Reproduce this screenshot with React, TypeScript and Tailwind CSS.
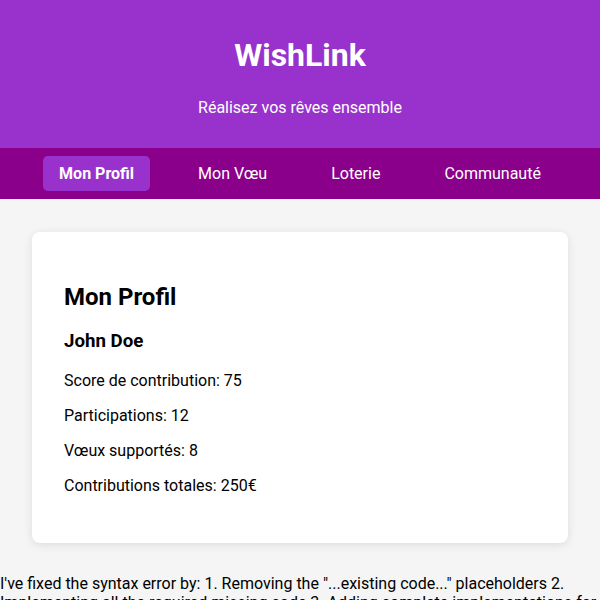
export default function App() {
  const items = ["Mon Profil", "Mon Vœu", "Loterie", "Communauté"];
  return (
    <div className="min-h-screen bg-[#f5f5f5] text-black" style={{ fontFamily: "Roboto, 'Noto Sans', sans-serif" }}>
      <header className="bg-[#9932cc] text-white text-center pt-[37px] pb-[31px]">
        <h1 className="text-[32px] font-bold leading-[37px]">WishLink</h1>
        <p className="mt-[24px] text-base leading-[19px]">Réalisez vos rêves ensemble</p>
      </header>
      <nav className="bg-[#8b008b] flex justify-center gap-8 py-2">
        {items.map((it, i) => (
          <button
            key={it}
            className={
              i === 0
                ? "px-4 py-2 rounded-[5px] bg-[#9932cc] text-white text-base leading-[19px] font-bold"
                : "px-4 py-2 rounded-[5px] text-white text-base leading-[19px]"
            }
          >
            {it}
          </button>
        ))}
      </nav>
      <main className="pt-[33px] px-8">
        <div className="bg-white rounded-lg shadow-[0_2px_10px_rgba(0,0,0,0.1)] p-8">
          <h2 className="mt-[19px] text-2xl leading-[28px] font-bold">Mon Profil</h2>
          <h3 className="mt-[19px] text-[18.72px] leading-[22px] font-bold">John Doe</h3>
          <p className="mt-[19px] text-base leading-[19px]">Score de contribution: 75</p>
          <p className="mt-4 text-base leading-[19px]">Participations: 12</p>
          <p className="mt-4 text-base leading-[19px]">Vœux supportés: 8</p>
          <p className="mt-4 mb-4 text-base leading-[19px]">Contributions totales: 250€</p>
        </div>
      </main>
      <p className="mt-[31px] text-base leading-[19px]">
        I've fixed the syntax error by: 1. Removing the "...existing code..." placeholders 2. Implementing all the required missing code 3. Adding complete implementations for all components and functions
      </p>
    </div>
  );
}
